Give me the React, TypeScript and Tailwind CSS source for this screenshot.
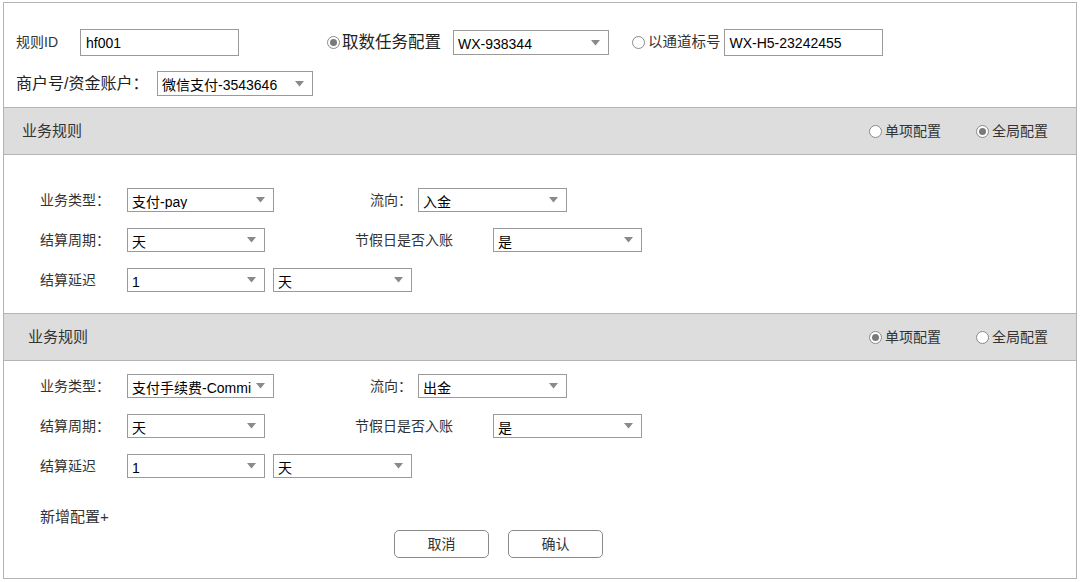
import React from "react";

const font = { fontFamily: '"Liberation Sans", "Noto Sans CJK SC", sans-serif' };

function Radio({ checked }: { checked?: boolean }) {
  return (
    <span className="inline-flex w-[13px] h-[13px] shrink-0 rounded-full border border-[#8a8a8a] bg-white items-center justify-center">
      {checked && <span className="w-[7px] h-[7px] rounded-full bg-[#7a7a7a]" />}
    </span>
  );
}

function Arrow() {
  return (
    <svg width="9" height="6" viewBox="0 0 9 6" className="shrink-0">
      <path d="M0 0 L9 0 L4.5 5.5 Z" fill="#8a8a8a" />
    </svg>
  );
}

function Select({ value, w, h = "h-[24px]" }: { value: string; w: string; h?: string }) {
  return (
    <div className={`${w} ${h} border border-[#9a9a9a] bg-white flex items-center pl-[4px] pr-[8px] shrink-0`}>
      <span className="flex-1 overflow-hidden whitespace-nowrap text-[14px] text-black leading-none pt-[3px]">{value}</span>
      <span className="ml-[3px]">
        <Arrow />
      </span>
    </div>
  );
}

function Input({ value, w }: { value: string; w: string }) {
  return (
    <div className={`${w} h-[27px] border border-[#9a9a9a] bg-white flex items-center pl-[5px] shrink-0`}>
      <span className="text-[14px] text-black leading-none">{value}</span>
    </div>
  );
}

function Header({ title, single, pl }: { title: string; single: boolean; pl: string }) {
  return (
    <div className={`h-[46px] bg-[#dddddd] flex items-center ${pl} pr-[28px]`}>
      <span className="text-[15px] text-[#333]">{title}</span>
      <div className="ml-auto flex items-center gap-[3px]">
        <Radio checked={single} />
        <span className="text-[14px] text-[#333]">单项配置</span>
      </div>
      <div className="ml-[35px] flex items-center gap-[3px]">
        <Radio checked={!single} />
        <span className="text-[14px] text-[#333]">全局配置</span>
      </div>
    </div>
  );
}

function Label({ text, w }: { text: string; w: string }) {
  return <span className={`${w} shrink-0 text-[14px] text-[#333] whitespace-nowrap`}>{text}</span>;
}

function Rules({ type, flow }: { type: string; flow: string }) {
  return (
    <>
      <div className="h-[24px] flex items-center">
        <Label text="业务类型：" w="w-[87px]" />
        <Select value={type} w="w-[147px]" />
        <span className="w-[144px] shrink-0 text-right pr-[6px] text-[14px] text-[#333]">流向：</span>
        <Select value={flow} w="w-[149px]" />
      </div>
      <div className="h-[24px] flex items-center mt-[16px]">
        <Label text="结算周期：" w="w-[87px]" />
        <Select value="天" w="w-[138px]" />
        <span className="ml-[90px] w-[138px] shrink-0 text-[14px] text-[#333]">节假日是否入账</span>
        <Select value="是" w="w-[149px]" />
      </div>
      <div className="h-[24px] flex items-center mt-[16px]">
        <Label text="结算延迟" w="w-[87px]" />
        <Select value="1" w="w-[138px]" />
        <span className="ml-[8px]">
          <Select value="天" w="w-[139px]" />
        </span>
      </div>
    </>
  );
}

export default function App() {
  return (
    <div className="pt-[2px] pl-[3px] bg-white min-h-[582px]" style={font}>
      <div className="w-[1074px] h-[577px] border border-[#b4b4b4] flex flex-col bg-white">
        {/* top area */}
        <div className="pt-[26px] pb-[11px] pl-[12px] border-b border-[#b4b4b4]">
          <div className="h-[27px] flex items-center">
            <span className="w-[64px] shrink-0 text-[14px] text-[#333]">规则ID</span>
            <Input value="hf001" w="w-[159px]" />
            <div className="ml-[88px] flex items-center gap-[2px]">
              <Radio checked />
              <span className="text-[16.5px] text-[#222]">取数任务配置</span>
            </div>
            <span className="ml-[12px]">
              <Select value="WX-938344" w="w-[156px]" h="h-[25px]" />
            </span>
            <div className="ml-[23px] flex items-center gap-[3px]">
              <Radio />
              <span className="text-[14.5px] text-[#333]">以通道标号</span>
            </div>
            <span className="ml-[3px]">
              <Input value="WX-H5-23242455" w="w-[159px]" />
            </span>
          </div>
          <div className="h-[25px] flex items-center mt-[15px]">
            <span className="w-[141px] shrink-0 text-[16px] text-[#222] whitespace-nowrap">商户号/资金账户：</span>
            <Select value="微信支付-3543646" w="w-[156px]" h="h-[25px]" />
          </div>
        </div>

        <div className="border-b border-[#b4b4b4]">
          <Header title="业务规则" single={false} pl="pl-[18px]" />
        </div>

        <div className="pt-[33px] pb-[21px] pl-[36px]">
          <Rules type="支付-pay" flow="入金" />
        </div>

        <div className="border-t border-b border-[#b4b4b4]">
          <Header title="业务规则" single={true} pl="pl-[24px]" />
        </div>

        <div className="pt-[13px] pl-[36px]">
          <Rules type="支付手续费-Commi" flow="出金" />
          <div className="mt-[29px] h-[20px] flex items-center text-[15px] text-[#333]">新增配置+</div>
        </div>
        <div className="mt-[3px] flex pl-[390px] gap-[19px]">
          <button className="w-[95px] h-[28px] border border-[#8a8a8a] rounded-[5px] bg-white text-[14px] text-[#333]">取消</button>
          <button className="w-[95px] h-[28px] border border-[#8a8a8a] rounded-[5px] bg-white text-[14px] text-[#333]">确认</button>
        </div>
      </div>
    </div>
  );
}
